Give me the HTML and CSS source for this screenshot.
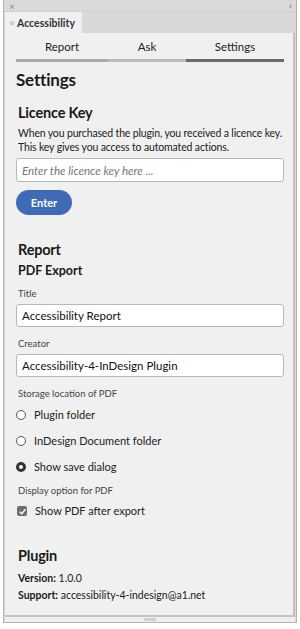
FILE: index.html
```html
<!DOCTYPE html>
<html lang="en">
<head>
    <meta charset="UTF-8">
    <meta name="viewport" content="width=device-width, initial-scale=1.0">
    <title>Accessibility</title>
    <link rel="stylesheet" href="styles.css">
</head>
<body>
    <div class="window">
        <div class="title-bar">
            <span class="close">×</span>
            <span class="collapse">‹‹</span>
        </div>
        <div class="tab-strip">
            <div class="panel-tab"><span class="grip">○</span>Accessibility</div>
        </div>

        <div class="panel">
            <div class="nav">
                <div class="nav-item">Report</div>
                <div class="nav-item">Ask</div>
                <div class="nav-item active">Settings</div>
            </div>

            <div class="content">
                <h1>Settings</h1>

                <h2>Licence Key</h2>
                <p class="intro">When you purchased the plugin, you received a licence key. This key gives you access to automated actions.</p>
                <input type="text" class="text-input key-input" placeholder="Enter the licence key here ...">
                <button class="enter-button">Enter</button>

                <h2 class="report-heading">Report</h2>
                <h3>PDF Export</h3>

                <label class="field-label">Title</label>
                <input type="text" class="text-input" value="Accessibility Report">

                <label class="field-label">Creator</label>
                <input type="text" class="text-input" value="Accessibility-4-InDesign Plugin">

                <div class="field-label">Storage location of PDF</div>
                <div class="options">
                    <div class="option"><span class="radio"></span>Plugin folder</div>
                    <div class="option"><span class="radio"></span>InDesign Document folder</div>
                    <div class="option"><span class="radio checked"></span>Show save dialog</div>
                </div>

                <div class="field-label">Display option for PDF</div>
                <div class="option check-option"><span class="checkbox">
                    <svg width="9" height="9" viewBox="0 0 10 10"><path d="M1.8 5.2 L4.2 7.5 L8.3 2.6" fill="none" stroke="#fff" stroke-width="1.7"/></svg>
                </span>Show PDF after export</div>

                <h2 class="plugin-heading">Plugin</h2>
                <div class="info"><b>Version:</b> 1.0.0</div>
                <div class="info"><b>Support:</b> accessibility-4-indesign@a1.net</div>
            </div>
        </div>
        <div class="bottom-bar"><span class="handle"></span></div>
    </div>
</body>
</html>
```

FILE: styles.css
```css
body {
    margin: 0;
    padding: 0;
    font-family: Lato, 'Open Sans', sans-serif;
    background-color: #ffffff;
    width: 300px;
    height: 629px;
}

.window {
    margin: 0 3px;
    height: 623px;
    border: 1px solid #b4b4b4;
    border-top: none;
    background-color: #d8d8d8;
    display: flex;
    flex-direction: column;
    box-sizing: border-box;
}

.title-bar {
    flex-shrink: 0;
    height: 12px;
    box-sizing: border-box;
    display: flex;
    justify-content: space-between;
    align-items: center;
    padding: 0 6px 0 5px;
    color: #8a8a8a;
    border-bottom: 1px dotted #c4c4c4;
    background-color: #dadada;
}

.close {
    font-size: 10px;
    line-height: 10px;
}

.collapse {
    font-size: 9px;
    letter-spacing: -2px;
}

.tab-strip {
    flex-shrink: 0;
    height: 21px;
    display: flex;
    padding-left: 1px;
}

.panel-tab {
    background-color: #f0f0f0;
    width: 77px;
    display: flex;
    align-items: center;
    font-size: 10.5px;
    font-weight: bold;
    color: #333;
    padding-left: 5px;
    box-sizing: border-box;
}

.grip {
    font-size: 6px;
    color: #999;
    margin-right: 3px;
}

.panel {
    flex: 1;
    min-height: 0;
    background-color: #f0f0f0;
    margin: 0 1px;
    border-right: 2px solid #c2c2c2;
    display: flex;
    flex-direction: column;
}

.nav {
    display: flex;
    margin: 0 9px 0 11px;
    padding-top: 6px;
}

.nav-item {
    text-align: center;
    font-size: 11.5px;
    line-height: 16px;
    color: #222;
    padding-bottom: 4px;
    border-bottom: 3px solid #aaaaaa;
}

.nav-item:nth-child(1) { width: 92px; }
.nav-item:nth-child(2) { width: 78px; border-bottom-color: #bbbbbb; }
.nav-item:nth-child(3) { flex: 1; border-bottom-color: #6a6a6a; }

.content {
    padding: 6px 9px 0 11px;
    color: #1a1a1a;
}

h1 {
    font-size: 17px;
    line-height: 24px;
    margin: 0;
    font-weight: bold;
    letter-spacing: -0.2px;
}

h2 {
    font-size: 14.5px;
    line-height: 20px;
    margin: 11px 0 0 2px;
    font-weight: bold;
    letter-spacing: -0.2px;
}

h3 {
    font-size: 12.5px;
    line-height: 18px;
    margin: 2px 0 0 2px;
    font-weight: bold;
}

.intro {
    font-size: 10.5px;
    line-height: 14px;
    letter-spacing: -0.15px;
    margin: 3px 0 0 2px;
    color: #222;
}

.text-input {
    display: block;
    width: 100%;
    height: 23px;
    margin-top: 4px;
    box-sizing: border-box;
    border: 1px solid #b8b8b8;
    border-radius: 3px;
    background-color: #fff;
    font-family: inherit;
    font-size: 11.5px;
    color: #111;
    padding: 0 5px;
    outline: none;
}

.key-input {
    height: 24px;
}

.text-input::placeholder {
    font-style: italic;
    color: #777;
}

.enter-button {
    display: block;
    margin-top: 8px;
    width: 56px;
    height: 25px;
    background-color: #3f6ab8;
    color: #fff;
    border: none;
    border-radius: 13px;
    font-family: inherit;
    font-size: 11px;
    font-weight: bold;
}

.report-heading {
    margin-top: 25px;
}

.field-label {
    display: block;
    font-size: 9.5px;
    line-height: 12px;
    color: #444;
    margin: 8px 0 0 2px;
}

.content input + .field-label {
    margin-top: 11px;
}

.options + .field-label {
    margin-top: 10px;
}

.options {
    display: flex;
    flex-direction: column;
    gap: 10px;
    margin-top: 7px;
}

.option {
    display: flex;
    align-items: center;
    font-size: 11px;
    line-height: 16px;
    color: #222;
}

.check-option {
    margin-top: 6px;
}

.radio {
    width: 8px;
    height: 8px;
    border: 1.5px solid #555;
    border-radius: 50%;
    background-color: #fff;
    margin-right: 8px;
    box-sizing: content-box;
}

.radio.checked {
    border: 3.5px solid #333;
    width: 4px;
    height: 4px;
}

.checkbox {
    width: 10px;
    height: 10px;
    margin-left: 1px;
    background-color: #6e6e6e;
    border-radius: 2px;
    margin-right: 8px;
    display: flex;
    align-items: center;
    justify-content: center;
}

.checkbox svg {
    display: block;
}

.plugin-heading {
    margin-top: 27px;
}

.info {
    font-size: 10.5px;
    line-height: 14px;
    color: #1a1a1a;
    margin: 3px 0 0 2px;
}

.plugin-heading + .info {
    margin-top: 5px;
}

.bottom-bar {
    flex-shrink: 0;
    height: 5px;
    margin: 0 1px;
    border-top: 2px solid #c4c4c4;
    background-color: #f0f0f0;
    display: flex;
    justify-content: center;
    align-items: center;
}

.handle {
    width: 12px;
    height: 3px;
    background-color: #d0d0d0;
}
```
